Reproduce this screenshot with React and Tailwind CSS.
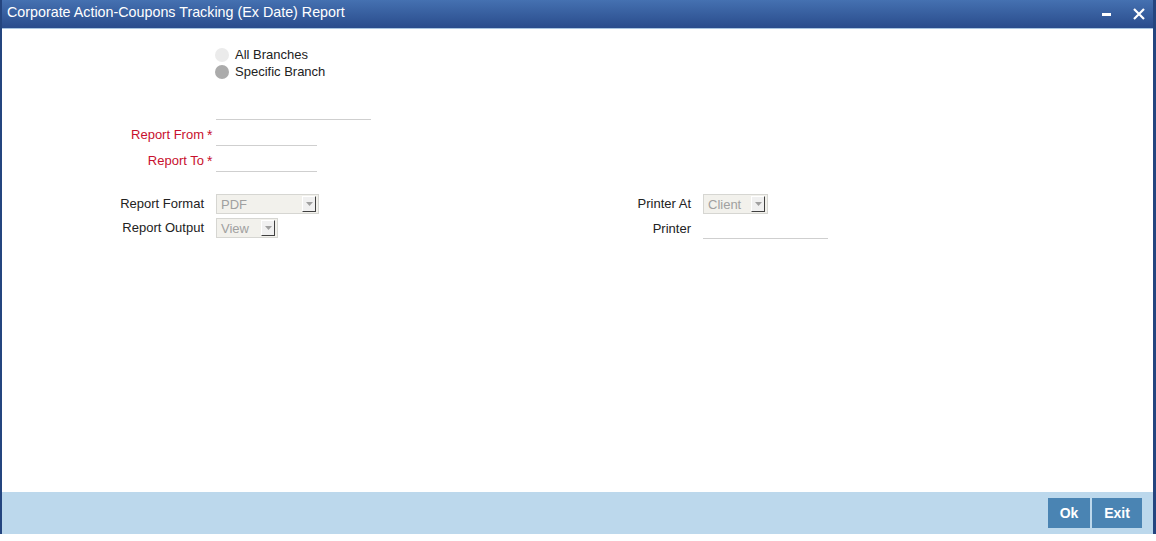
import React from 'react';

const font = { fontFamily: '"Liberation Sans", Arial, sans-serif' };

const Select = ({ value, width }) => (
  <div className={`flex h-[20px] items-center justify-between border border-[#d6d6d2] bg-[#f2f1ec] pl-[4px] pr-[2px] ${width}`}>
    <span className="text-[13px] leading-none text-[#a0a0a0]">{value}</span>
    <span className="flex h-[16px] w-[14px] items-center justify-center border-r border-b border-[#404040] border-t border-l border-t-white border-l-white bg-[#f0f0f0]">
      <svg width="7" height="4" viewBox="0 0 7 4">
        <path d="M0 0h7L3.5 4z" fill="#a0a0a0" />
      </svg>
    </span>
  </div>
);

const Label = ({ children, required, red }) => (
  <div className="flex w-[214px] shrink-0">
    <span className={`w-[202px] text-right ${red ? 'text-[#c8102e]' : 'text-[#222]'}`}>{children}</span>
    <span className="w-[12px] pl-[3px] text-[14px] text-[#c8102e]">{required ? '*' : ''}</span>
  </div>
);

export default function App() {
  return (
    <div className="h-[541px] w-[1156px] bg-white text-[13px]" style={font}>
      <div className="flex h-[534px] flex-col border-l-2 border-r-[3px] border-[#24457f]">
        {/* title bar */}
        <div className="flex h-[29px] shrink-0 items-center justify-between border-b border-[#a8c4e0] bg-gradient-to-b from-[#4571b1] to-[#2a4c8c] pl-[5px] pr-[8px]">
          <span className="pb-[2px] text-[14.3px] text-white">Corporate Action-Coupons Tracking (Ex Date) Report</span>
          <div className="flex items-center gap-[22px] pb-[1px]">
            <span className="mt-[1px] block h-[3px] w-[9px] bg-white" />
            <svg width="12" height="12" viewBox="0 0 12 12">
              <path d="M1 1l10 10M11 1L1 11" stroke="white" strokeWidth="2.2" />
            </svg>
          </div>
        </div>

        {/* body */}
        <div className="flex-1 pt-[17px]">
          <div className="ml-[213px] flex flex-col text-[#222]">
            <label className="flex h-[17px] items-center gap-[6px]">
              <span className="h-[14px] w-[14px] rounded-full bg-[#ebebeb]" />
              All Branches
            </label>
            <label className="flex h-[17px] items-center gap-[6px]">
              <span className="h-[14px] w-[14px] rounded-full bg-[#ababab]" />
              Specific Branch
            </label>
          </div>

          <div className="ml-[214px] mt-[30px] w-[155px] border-b border-[#cfcfcf] pt-[9px]" />

          <div className="mt-[5px] flex items-center">
            <Label required red>Report From</Label>
            <div className="h-[20px] w-[101px] border-b border-[#cfcfcf]" />
          </div>
          <div className="mt-[5px] flex items-center">
            <Label required red>Report To</Label>
            <div className="h-[20px] w-[101px] border-b border-[#cfcfcf]" />
          </div>

          <div className="mt-[22px] flex">
            <div className="flex w-[600px] flex-col gap-[4px]">
              <div className="flex items-center">
                <Label>Report Format</Label>
                <Select value="PDF" width="w-[103px]" />
              </div>
              <div className="flex items-center">
                <Label>Report Output</Label>
                <Select value="View" width="w-[62px]" />
              </div>
            </div>
            <div className="flex flex-col gap-[4px]">
              <div className="flex items-center">
                <span className="w-[101px] pr-[12px] text-right text-[#222]">Printer At</span>
                <Select value="Client" width="w-[65px]" />
              </div>
              <div className="flex items-center">
                <span className="w-[101px] pr-[12px] text-right text-[#222]">Printer</span>
                <div className="h-[21px] w-[125px] border-b border-[#cfcfcf]" />
              </div>
            </div>
          </div>
        </div>

        {/* footer */}
        <div className="flex h-[42px] shrink-0 items-center justify-end gap-[2px] bg-[#bcd8ec] pr-[11px]">
          <button className="h-[30px] w-[42px] bg-[#4a84b3] text-[14px] font-bold text-white">Ok</button>
          <button className="h-[30px] w-[50px] bg-[#4a84b3] text-[14px] font-bold text-white">Exit</button>
        </div>
      </div>
    </div>
  );
}
